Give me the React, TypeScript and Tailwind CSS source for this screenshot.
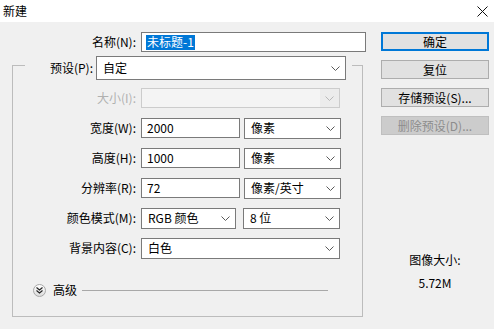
const font = { fontFamily: '"Microsoft YaHei UI", "Noto Sans CJK SC", sans-serif' }

function Chevron({ disabled }: { disabled?: boolean }) {
  return (
    <svg width="9" height="5" viewBox="0 0 9 5" className="shrink-0">
      <path d="M0.5 0.5 L4.5 4.5 L8.5 0.5" fill="none" stroke={disabled ? '#b8b8b8' : '#5a5a5a'} strokeWidth="1" />
    </svg>
  )
}

function Select({ value, w, h = 'h-[21px]' }: { value: string; w: string; h?: string }) {
  return (
    <div className={`${w} ${h} flex items-center justify-between border border-[#7a7a7a] bg-white pl-[6px] pr-[5px] text-[12px] leading-none text-black`}>
      <span>{value}</span>
      <Chevron />
    </div>
  )
}

function Input({ value, w }: { value: string; w: string }) {
  return (
    <div className={`${w} h-[20px] flex items-center border border-[#7a7a7a] bg-white pl-[5px] text-[12px] leading-none text-black`}>
      {value}
    </div>
  )
}

function Row({ label, disabled, children }: { label: string; disabled?: boolean; children: React.ReactNode }) {
  return (
    <div className="flex items-center h-[22px]">
      <div className={`w-[124px] pr-[1px] text-right text-[12px] leading-none ${disabled ? 'text-[#b0b0b0]' : 'text-black'}`}>{label}</div>
      <div className="flex items-center gap-[4px] ml-[4px]">{children}</div>
    </div>
  )
}

function Button({ label, primary, disabled }: { label: string; primary?: boolean; disabled?: boolean }) {
  return (
    <div
      className={`w-[108px] h-[19px] flex items-center justify-center text-[12px] leading-none ${
        primary
          ? 'border-2 border-[#0078d7] bg-[#e1e1e1] text-black'
          : disabled
          ? 'border border-[#bfbfbf] bg-[#cccccc] text-[#8d8d8d]'
          : 'border border-[#adadad] bg-[#e1e1e1] text-black'
      }`}
    >
      {label}
    </div>
  )
}

export default function App() {
  return (
    <div className="w-[494px] h-[329px] bg-[#f0f0f0] overflow-hidden" style={font}>
      <div className="h-[22px] bg-white flex items-center justify-between pl-[3px] pr-[5px]">
        <span className="text-[12px] leading-none text-black">新建</span>
        <svg width="11" height="11" viewBox="0 0 11 11" className="mr-[1px]">
          <path d="M0.5 0.5 L10.5 10.5 M10.5 0.5 L0.5 10.5" stroke="#111" strokeWidth="1" />
        </svg>
      </div>

      <div className="flex">
        <div className="w-[370px]">
          <div className="flex items-center h-[20px] mt-[10px]">
            <div className="w-[137px] pr-[1px] text-right text-[12px] leading-none text-black">名称(N):</div>
            <div className="ml-[4px] w-[225px] h-[20px] flex items-center border border-[#7a7a7a] bg-white pl-[4px] text-[12px] leading-none">
              <span className="bg-[#0078d7] text-white h-[15px] flex items-center px-[1px]">未标题-1</span>
            </div>
          </div>

          <div className="ml-[12px] mt-[13px] w-[351px] border border-[#bcbcbc] pb-[19px]">
            <div className="ml-[12px] mt-[-10px] w-[327px] bg-[#f0f0f0] flex items-center h-[24px]">
              <div className="w-[70px] pr-[2px] text-right text-[12px] leading-none text-black">预设(P):</div>
              <Select value="自定" w="w-[250px] ml-[1px]" h="h-[24px]" />
            </div>

            <div className="mt-[7px] flex flex-col gap-[8px]">
              <Row label="大小(I):" disabled>
                <div className="w-[199px] h-[20px] flex items-center justify-between border border-[#cccccc] bg-[#ececec] pr-[5px]">
                  <div className="w-[178px] h-full bg-[#f4f4f4]" />
                  <Chevron disabled />
                </div>
              </Row>
              <Row label="宽度(W):">
                <Input value="2000" w="w-[99px]" />
                <Select value="像素" w="w-[97px]" />
              </Row>
              <Row label="高度(H):">
                <Input value="1000" w="w-[99px]" />
                <Select value="像素" w="w-[97px]" />
              </Row>
              <Row label="分辨率(R):">
                <Input value="72" w="w-[99px]" />
                <Select value="像素/英寸" w="w-[97px]" />
              </Row>
              <Row label="颜色模式(M):">
                <Select value="RGB 颜色" w="w-[95px] mr-[3px]" />
                <Select value="8 位" w="w-[97px]" />
              </Row>
              <Row label="背景内容(C):">
                <Select value="白色" w="w-[199px]" />
              </Row>
            </div>

            <div className="mt-[24px] ml-[20px] flex items-center h-[14px]">
              <div className="w-[13px] h-[13px] rounded-full border border-[#a8a8a8] bg-gradient-to-b from-white to-[#dcdcdc] flex items-center justify-center">
                <svg width="7" height="7" viewBox="0 0 7 7">
                  <path d="M0.5 0.5 L3.5 3 L6.5 0.5 M0.5 3.5 L3.5 6 L6.5 3.5" fill="none" stroke="#222" strokeWidth="1.1" />
                </svg>
              </div>
              <span className="ml-[7px] text-[12px] leading-none text-black">高级</span>
              <div className="ml-[5px] w-[246px] h-px bg-[#a8a8a8]" />
            </div>
          </div>
        </div>

        <div className="ml-[11px] mt-[10px] flex flex-col">
          <div className="flex flex-col gap-[9px]">
            <Button label="确定" primary />
            <Button label="复位" />
            <Button label="存储预设(S)..." />
            <Button label="删除预设(D)..." disabled />
          </div>
          <div className="mt-[119px] w-[108px] flex flex-col items-center text-[12px] leading-none text-black">
            <span>图像大小:</span>
            <span className="mt-[11px]">5.72M</span>
          </div>
        </div>
      </div>
    </div>
  )
}
